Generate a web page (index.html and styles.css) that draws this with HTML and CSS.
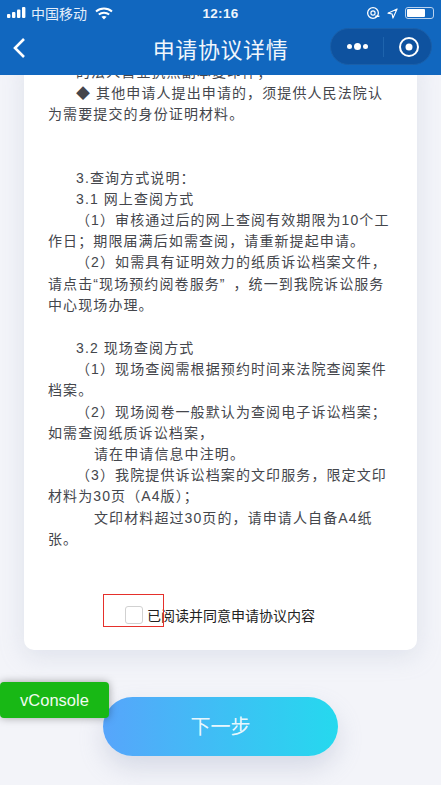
FILE: index.html
```html
<!DOCTYPE html>
<html lang="zh-CN">
<head>
<meta charset="utf-8">
<title>申请协议详情</title>
<link rel="stylesheet" href="styles.css">
</head>
<body>
<div class="page">
  <header class="top">
    <div class="status">
      <div class="status-left">
        <svg class="signal" viewBox="0 0 20 12" width="20" height="12"><rect x="0" y="7" width="3.4" height="4" rx="1"/><rect x="5" y="5" width="3.4" height="6" rx="1"/><rect x="10" y="2.5" width="3.4" height="8.5" rx="1"/><rect x="15" y="0" width="3.4" height="11" rx="1"/></svg>
        <span class="carrier">中国移动</span>
        <svg class="wifi" viewBox="0 0 18 13" width="18" height="13"><path d="M1 4.6C5.6.6 12.4.6 17 4.6M3.8 7.6c3-2.5 7.4-2.5 10.400 0" fill="none" stroke="#fff" stroke-width="2"/><path d="M6.400 9.800c1.500-1.200 3.700-1.200 5.200 0L9 12.600z" fill="#fff"/></svg>
      </div>
      <span class="time">12:16</span>
      <div class="status-right">
        <svg viewBox="0 0 12 12" width="14" height="14"><circle cx="6" cy="6" r="4.600" fill="none" stroke="#fff" stroke-width="1.100"/><circle cx="6" cy="6" r="1.800" fill="none" stroke="#fff" stroke-width="1"/><path d="M8 8.800h3.500" stroke="#fff" stroke-width="1.300"/></svg>
        <svg viewBox="0 0 12 12" width="11" height="11"><path d="M11 1 1 5.600l4.600.9.900 4.500z" fill="none" stroke="#fff" stroke-width="1.200" stroke-linejoin="round"/></svg>
        <div class="battery"><div class="battery-fill"></div></div>
      </div>
    </div>
    <div class="nav">
      <svg class="back" viewBox="0 0 14 22" width="14" height="22"><path d="M12 2 3 11l9 9" fill="none" stroke="#fff" stroke-width="2.600"/></svg>
      <h1 class="title">申请协议详情</h1>
      <div class="capsule">
        <div class="capsule-more"><i></i><b></b><i></i></div>
        <div class="capsule-sep"></div>
        <svg viewBox="0 0 22 22" width="22" height="22"><circle cx="11" cy="11" r="9" fill="none" stroke="#fff" stroke-width="2"/><circle cx="11" cy="11" r="3.500" fill="#fff"/></svg>
      </div>
    </div>
  </header>

  <main class="content">
    <section class="card">
      <div class="text">
        <p class="indent2">的法人营业执照副本复印件；</p>
        <p class="indent2">◆ 其他申请人提出申请的，须提供人民法院认为需要提交的身份证明材料。</p>
        <p class="gap-large"></p>
        <p class="indent2">3.查询方式说明：</p>
        <p class="indent2">3.1 网上查阅方式</p>
        <p class="indent2">（1）审核通过后的网上查阅有效期限为10个工作日；期限届满后如需查阅，请重新提起申请。</p>
        <p class="indent2">（2）如需具有证明效力的纸质诉讼档案文件，请点击“现场预约阅卷服务”&#8201;&#8201;，统一到我院诉讼服务中心现场办理。</p>
        <p class="gap"></p>
        <p class="indent2">3.2 现场查阅方式</p>
        <p class="indent2">（1）现场查阅需根据预约时间来法院查阅案件档案。</p>
        <p class="indent2">（2）现场阅卷一般默认为查阅电子诉讼档案；如需查阅纸质诉讼档案，</p>
        <p class="indent3">请在申请信息中注明。</p>
        <p class="indent2">（3）我院提供诉讼档案的文印服务，限定文印材料为30页（A4版）；</p>
        <p class="indent3">文印材料超过30页的，请申请人自备A4纸张。</p>
      </div>
      <label class="agree">
        <span class="checkbox"></span>
        <span class="agree-text">已阅读并同意申请协议内容</span>
        <span class="red-box"></span>
      </label>
    </section>
    <div class="actions">
      <button class="next" type="button">下一步</button>
    </div>
  </main>
  <div class="vconsole">vConsole</div>
</div>
</body>
</html>
```
FILE: styles.css
```css
* { box-sizing: border-box; }
html, body { margin: 0; padding: 0; }
body {
  width: 441px;
  height: 785px;
  overflow: hidden;
  font-family: "Liberation Sans", "Noto Sans CJK SC", sans-serif;
  background: #f3f4f9;
}
.page {
  position: relative;
  width: 441px;
  height: 785px;
  overflow: hidden;
  display: flex;
  flex-direction: column;
  background: #f3f4f9;
}
.top {
  position: relative;
  z-index: 2;
  flex: none;
  height: 75px;
  background: #1167bf;
  color: #fff;
}
.status {
  height: 26px;
  padding: 0 7px;
  display: grid;
  grid-template-columns: 1fr auto 1fr;
  align-items: center;
}
.status-left { display: flex; align-items: center; gap: 5px; }
.signal { fill: #fff; margin-right: -1px; }
.carrier { font-size: 14px; color: #e4eefa; }
.wifi { margin-left: 3px; }
.time { font-size: 13.500px; font-weight: 700; letter-spacing: .3px; color: #eef5fc; }
.status-right { display: flex; justify-content: flex-end; align-items: center; gap: 7px; }
.battery {
  width: 29px;
  height: 12px;
  border: 1px solid #b9d2ee;
  border-radius: 3px;
  padding: 1px;
}
.battery-fill { width: 18px; height: 8px; background: #fff; border-radius: 1px; }
.nav {
  position: relative;
  height: 43px;
  display: flex;
  align-items: center;
  justify-content: center;
}
.back { position: absolute; left: 12px; top: 11px; }
.title {
  margin: 0;
  font-size: 22px;
  font-weight: 400;
  letter-spacing: .6px;
  color: #f0f6fc;
  font-family: "Noto Sans CJK SC", sans-serif;
}
.capsule {
  position: absolute;
  right: 9px;
  top: 2px;
  width: 102px;
  height: 37px;
  border-radius: 19px;
  background: #0e529f;
  border: 1px solid #1a5fa9;
  display: flex;
  align-items: center;
  padding-left: 16px;
  gap: 14px;
}
.capsule-more { display: flex; align-items: center; gap: 2px; width: 22px; }
.capsule-more i { width: 5px; height: 5px; border-radius: 50%; background: #fff; }
.capsule-more b { width: 7px; height: 7px; border-radius: 50%; background: #fff; }
.capsule-sep { width: 1px; height: 20px; background: #1e64ad; }
.content { flex: 1; min-height: 0; display: flex; flex-direction: column; }
.card {
  margin: -20px 24px 0;
  width: 393px;
  height: 595px;
  flex: none;
  background: #fff;
  border-radius: 10px;
  box-shadow: 0 6px 24px rgba(170, 178, 200, .28);
  padding: 7px 26px 0 24px;
  color: #44464c;
  display: flex;
  flex-direction: column;
}
.text { font-size: 14px; line-height: 21.200px; letter-spacing: 1.100px; height: 493px; flex: none; }
.text p { margin: 0; }
.indent2 { text-indent: 28px; }
.indent3 { text-indent: 46px; }
.gap { height: 22px; }
.gap-large { height: 42px; }
.agree {
  position: relative;
  margin-top: 48px;
  display: flex;
  align-items: center;
  padding-left: 77px;
  height: 24px;
}
.checkbox {
  width: 18px;
  height: 18px;
  flex: none;
  background: #fff;
  border: 1px solid #d1d1d1;
  border-radius: 3px;
}
.agree-text { margin-left: 4px; font-size: 14px; letter-spacing: 0; color: #222; white-space: nowrap; }
.red-box {
  position: absolute;
  left: 55px;
  top: -9px;
  width: 61px;
  height: 33px;
  border: 1.500px solid #e5302b;
}
.actions { display: flex; justify-content: center; margin-top: 47px; }
.next {
  width: 235px;
  height: 59px;
  border: 0;
  border-radius: 30px;
  background: linear-gradient(90deg, #57a5fb, #25d9ee);
  box-shadow: 0 12px 24px rgba(150, 160, 190, .3);
  color: rgba(255, 255, 255, .9);
  font-size: 20px;
  line-height: 56px;
  padding: 0 0 2px;
  font-family: "Noto Sans CJK SC", sans-serif;
}
.vconsole {
  position: absolute;
  left: 0;
  top: 682px;
  width: 109px;
  height: 36px;
  background: #18b815;
  border-radius: 4px;
  box-shadow: 0 0 8px rgba(0, 0, 0, .35);
  color: #f1fbf0;
  font-size: 16.500px;
  line-height: 36px;
  text-align: center;
}
```
